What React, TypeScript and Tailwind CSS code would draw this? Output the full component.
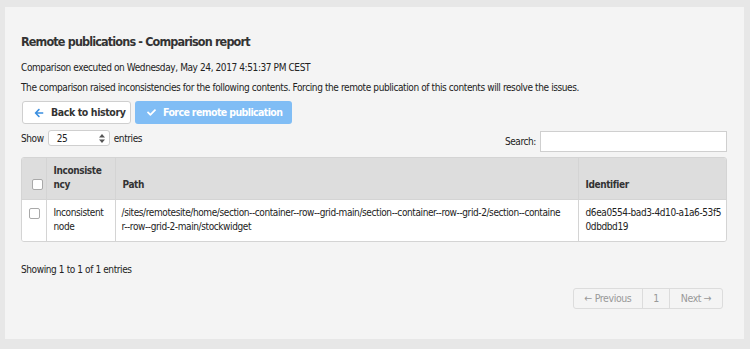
import { FaArrowLeft, FaCheck } from 'react-icons/fa';

const font = { fontFamily: '"DejaVu Sans", Verdana, sans-serif' };

function Checkbox() {
  return <span className="inline-block w-[11px] h-[11px] bg-white border border-[#a9a9a9] rounded-[2px]" />;
}

export default function App() {
  return (
    <div style={font} className="w-[750px] h-[349px] bg-[#e7e7e7] pt-[7px] pl-[5px] text-[#222] font-stretch-condensed tracking-[-0.4px]">
      <div className="w-[739px] h-[332px] bg-[#f4f4f4] pt-[27px] pl-[16px] pr-[17px]">
        <h1 className="text-[12.5px] leading-[16px] font-bold text-[#333] tracking-[-0.85px]">Remote publications - Comparison report</h1>
        <p className="mt-[11px] text-[10px] leading-[14px]">Comparison executed on Wednesday, May 24, 2017 4:51:37 PM CEST</p>
        <p className="mt-[6px] text-[10px] leading-[14px]">
          The comparison raised inconsistencies for the following contents. Forcing the remote publication of this contents will resolve the issues.
        </p>

        {/* buttons */}
        <div className="mt-[6px] flex gap-[4px] pl-[1px]">
          <button className="h-[23px] w-[109px] flex items-center gap-[7px] pl-[11px] bg-white border border-[#cfcfcf] rounded-[3px] text-[10.5px] font-bold text-[#333] whitespace-nowrap">
            <FaArrowLeft className="text-[#3a8ee0] w-[10px] h-[10px]" />
            Back to history
          </button>
          <button className="h-[23px] w-[157px] flex items-center gap-[7px] pl-[12px] bg-[#80bdf5] rounded-[3px] text-[10.5px] font-bold text-white whitespace-nowrap tracking-[-0.6px]">
            <FaCheck className="w-[9px] h-[9px]" />
            Force remote publication
          </button>
        </div>

        {/* show / search */}
        <div className="mt-[6px] flex justify-between items-start h-[22px]">
          <div className="flex items-center gap-[4px] text-[10px]">
            <span>Show</span>
            <div className="w-[62px] h-[16px] bg-white border border-[#cfcfcf] rounded-[3px] flex items-center justify-between pl-[8px] pr-[4px]">
              <span>25</span>
              <svg width="6" height="9" viewBox="0 0 6 9" fill="#555">
                <path d="M3 0L6 3.5H0Z" />
                <path d="M3 9L0 5.5H6Z" />
              </svg>
            </div>
            <span>entries</span>
          </div>
          <div className="flex items-center gap-[4px] mt-[1px] text-[10px]">
            <span>Search:</span>
            <div className="w-[187px] h-[21px] bg-white border border-[#cfcfcf]" />
          </div>
        </div>

        {/* table */}
        <div className="mt-[5px] border border-[#d4d4d4] rounded-[3px] overflow-hidden">
          <table className="w-full table-fixed border-collapse text-[10px] leading-[14px]">
            <colgroup>
              <col className="w-[24px]" />
              <col className="w-[69px]" />
              <col className="w-[463px]" />
              <col />
            </colgroup>
            <thead>
              <tr className="bg-[#dddddd] h-[41px] font-bold text-[#333]">
                <th className="align-bottom pb-[5px] pl-[7px]"><Checkbox /></th>
                <th className="align-bottom text-left pb-[7px] px-[7px] border-l border-[#d4d4d4]">Inconsiste<br />ncy</th>
                <th className="align-bottom text-left pb-[7px] px-[7px] border-l border-[#d4d4d4]">Path</th>
                <th className="align-bottom text-left pb-[7px] px-[7px] border-l border-[#d4d4d4]">Identifier</th>
              </tr>
            </thead>
            <tbody>
              <tr className="bg-white h-[42px] border-t border-[#d4d4d4]">
                <td className="align-top pt-[8px] pl-[7px]"><Checkbox /></td>
                <td className="align-top py-[6px] px-[7px] border-l border-[#d4d4d4] whitespace-nowrap">Inconsistent<br />node</td>
                <td className="align-top py-[6px] px-[6px] border-l border-[#d4d4d4] whitespace-nowrap overflow-hidden">
                  /sites/remotesite/home/section--container--row--grid-main/section--container--row--grid-2/section--containe<br />r--row--grid-2-main/stockwidget
                </td>
                <td className="align-top py-[6px] px-[7px] border-l border-[#d4d4d4] whitespace-nowrap overflow-hidden">d6ea0554-bad3-4d10-a1a6-53f5<br />0dbdbd19</td>
              </tr>
            </tbody>
          </table>
        </div>

        <p className="mt-[21px] text-[10px] leading-[14px]">Showing 1 to 1 of 1 entries</p>

        {/* pagination */}
        <div className="mt-[11px] flex justify-end pr-[4px]">
          <div className="flex h-[21px] border border-[#dcdcdc] rounded-[3px] text-[10.5px] text-[#999]">
            <span className="w-[68px] flex items-center justify-center">← Previous</span>
            <span className="w-[27px] flex items-center justify-center border-l border-[#dcdcdc]">1</span>
            <span className="w-[53px] flex items-center justify-center border-l border-[#dcdcdc]">Next →</span>
          </div>
        </div>
      </div>
    </div>
  );
}
